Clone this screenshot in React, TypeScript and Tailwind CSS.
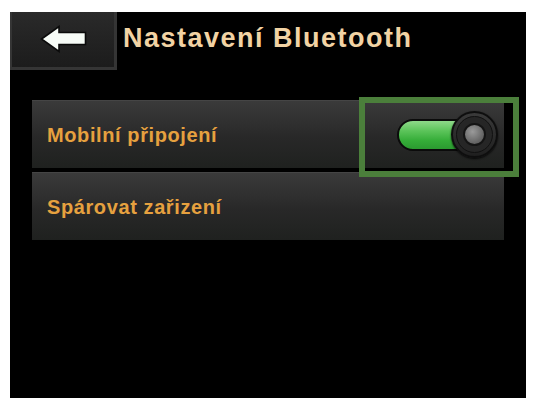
import React from "react";

const font = { fontFamily: '"Liberation Sans", Arial, sans-serif' };

function BackArrow() {
  return (
    <svg width="48" height="30" viewBox="0 0 48 30">
      <path
        d="M1.5 14 L19 1.5 L19 7.5 L45.5 7.5 L45.5 19.5 L19 19.5 L19 26.5 Z"
        fill="#f6fbf6"
        stroke="#0a0a0a"
        strokeWidth="1.6"
        strokeLinejoin="miter"
      />
    </svg>
  );
}

function Toggle() {
  return (
    <div className="relative flex items-center w-[101px] h-[47px]">
      <div className="w-[82px] h-[32px] rounded-full border-2 border-[#0b0b0b] bg-[linear-gradient(to_bottom,#8fd98a_0%,#5cc45a_35%,#35ad38_70%,#2b9a30_100%)]" />
      <div className="absolute right-0 top-0 w-[47px] h-[47px] rounded-full border-2 border-[#0e0e0e] bg-[linear-gradient(to_bottom,#3a3a3a,#1f1f1f)] flex items-center justify-center shadow-[0_1px_2px_rgba(0,0,0,0.8)]">
        <div className="w-[37px] h-[37px] rounded-full bg-[#262626] border border-[#111] flex items-center justify-center">
          <div className="w-[23px] h-[23px] rounded-full border-2 border-[#141414] bg-[radial-gradient(circle_at_40%_35%,#9a9a9a,#6a6a6a_60%,#4e4e4e)]" />
        </div>
      </div>
    </div>
  );
}

function Row({ label, children }: { label: string; children?: React.ReactNode }) {
  return (
    <div className="relative flex items-center justify-between h-[68px] pl-[15px] pr-[6px] border-t border-[#454545] bg-[linear-gradient(to_bottom,#3a3a3a_0%,#2f2f2f_35%,#282828_55%,#1f211f_100%)]">
      <span className="text-[20px] font-bold tracking-[0.6px] text-[#e6a13f]" style={font}>
        {label}
      </span>
      {children}
    </div>
  );
}

export default function App() {
  return (
    <div className="w-[538px] h-[405px] bg-white pt-[12px] pl-[10px]">
      <div className="w-[516px] h-[386px] bg-black flex flex-col">
        {/* Header */}
        <div className="flex items-center">
          <button className="w-[107px] h-[58px] flex items-center justify-center border-[3px] border-t-0 border-l-[2px] border-[#353535] bg-[linear-gradient(to_bottom,#2a2a2a,#1c1c1c)]">
            <span className="ml-[2px] mt-[1px]">
              <BackArrow />
            </span>
          </button>
          <h1
            className="ml-[6px] mt-[-6px] text-[27px] font-bold tracking-[1.5px] text-[#f2d3a4]"
            style={font}
          >
            Nastavení Bluetooth
          </h1>
        </div>

        {/* Settings list */}
        <div className="mt-[30px] ml-[22px] w-[472px] flex flex-col gap-[4px]">
          <Row label="Mobilní připojení">
            <Toggle />
            <div className="absolute z-10 left-[327px] top-[-4px] w-[160px] h-[80px] border-[6px] border-[#4b7f3b] pointer-events-none" />
          </Row>
          <Row label="Spárovat zařizení" />
        </div>
      </div>
    </div>
  );
}
